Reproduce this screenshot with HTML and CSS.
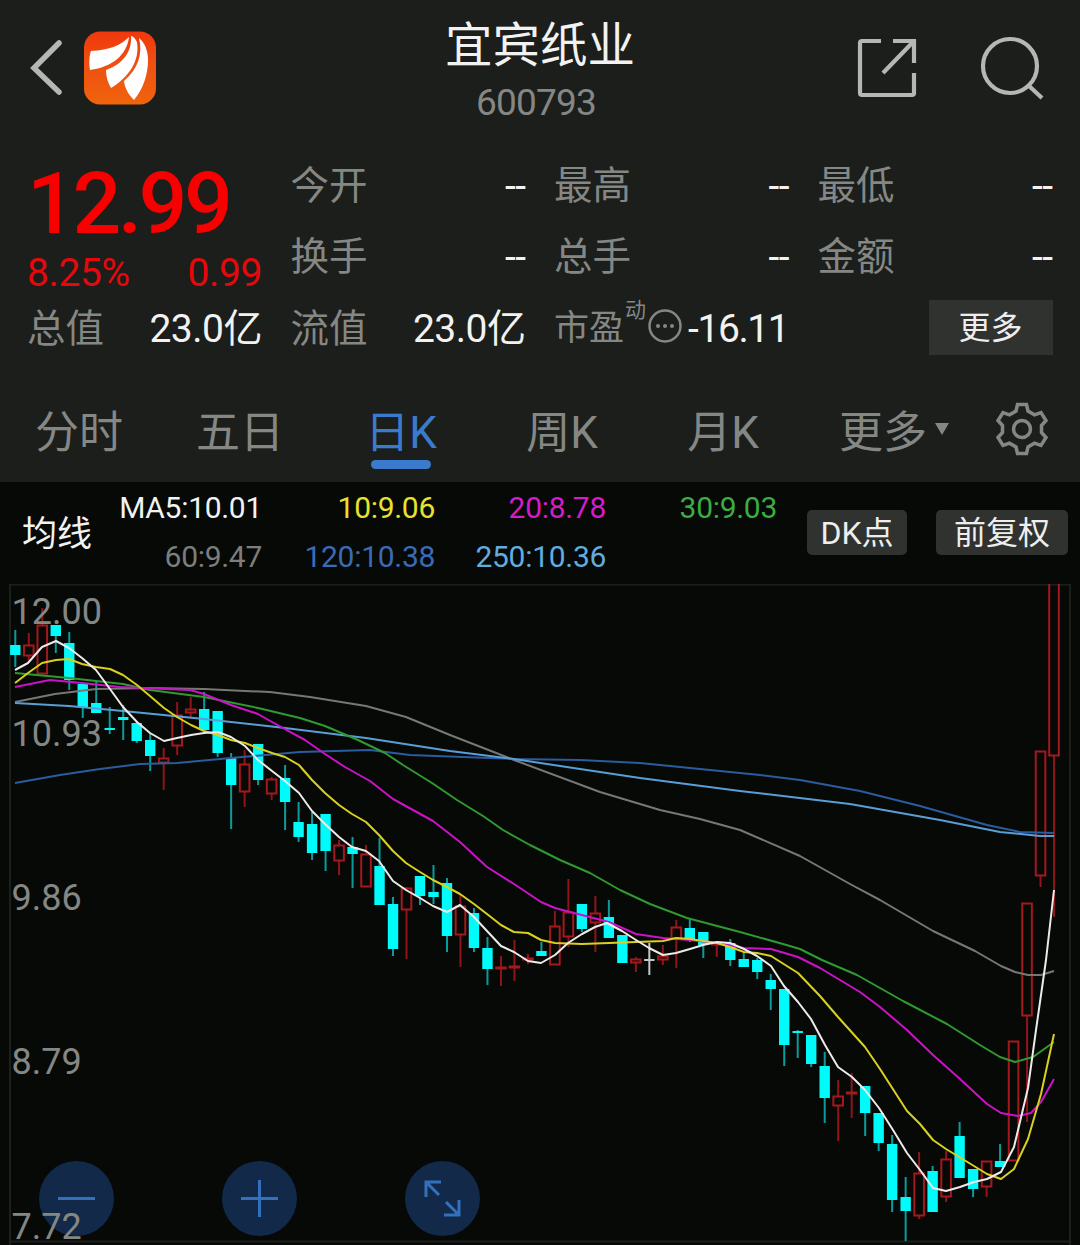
FILE: index.html
```html
<!DOCTYPE html>
<html lang="zh-CN">
<head>
    <meta charset="UTF-8">
    <meta name="viewport" content="width=device-width, initial-scale=1.0">
    <title>宜宾纸业 600793</title>
    <link rel="stylesheet" href="styles.css">
</head>
<body>
    <!-- Header -->
    <header class="header">
        <div class="header-left">
            <svg class="back" width="36" height="60" viewBox="0 0 36 60"><path d="M30 6 L5 31 L30 55"/></svg>
            <svg class="logo" width="74" height="76" viewBox="0 0 74 76">
                <defs>
                    <linearGradient id="logo-bg" x1="0" y1="0" x2="0" y2="1">
                        <stop offset="0" stop-color="#f0380c"/>
                        <stop offset="0.45" stop-color="#ee5012"/>
                        <stop offset="1" stop-color="#f0640c"/>
                    </linearGradient>
                </defs>
                <rect x="1" y="1.500" width="72" height="73" rx="16" fill="url(#logo-bg)"/>
                <path fill="#fff" d="M46 7 C38 15 27 20 8 21 C6 26 6 34 7 40 C29 37 44 25 46 7 Z"/>
                <path fill="#fff" d="M48 6 C49 22 40 34 23 40 C23 47 25 53 28 58 C46 47 57 31 54 12 C52 8 50 6 48 6 Z"/>
                <path fill="#fff" d="M56 8 C60 24 55 39 41 51 C42 59 46 65 51 70 C60 59 65 45 65 30 C65 21 62 13 56 8 Z"/>
            </svg>
        </div>
        <div class="header-title">
            <h1>宜宾纸业</h1>
            <span>600793</span>
        </div>
        <div class="header-right">
            <svg width="60" height="62" viewBox="0 0 60 62">
                <path d="M24 5 H5 Q3 5 3 7 V57 Q3 59 5 59 H55 Q57 59 57 57 V37"/>
                <path d="M36 5 H57 V27 M56 6 L26 37"/>
            </svg>
            <svg width="66" height="68" viewBox="0 0 66 68">
                <circle cx="30" cy="30" r="27"/>
                <path d="M48 49 L62 62"/>
            </svg>
        </div>
    </header>

    <!-- Quote -->
    <section class="quote">
        <div class="price-box">
            <div class="price">12.99</div>
            <div class="change"><span>8.25%</span><span>0.99</span></div>
        </div>
        <div class="item"><label>今开</label><b>--</b></div>
        <div class="item"><label>最高</label><b>--</b></div>
        <div class="item"><label>最低</label><b>--</b></div>
        <div class="item"><label>换手</label><b>--</b></div>
        <div class="item"><label>总手</label><b>--</b></div>
        <div class="item"><label>金额</label><b>--</b></div>
        <div class="item"><label>总值</label><b>23.0亿</b></div>
        <div class="item"><label>流值</label><b>23.0亿</b></div>
        <div class="item pe">
            <label>市盈<sup>动</sup></label>
            <svg width="34" height="36" viewBox="0 0 34 36">
                <circle class="ring" cx="17" cy="18" r="15.5"/>
                <circle cx="10" cy="18" r="2"/><circle cx="17" cy="18" r="2"/><circle cx="24" cy="18" r="2"/>
            </svg>
            <b>-16.11</b>
        </div>
        <div class="item more"><button>更多</button></div>
    </section>

    <!-- Period tabs -->
    <nav class="tabs">
        <a>分时</a>
        <a>五日</a>
        <a class="active">日K</a>
        <a>周K</a>
        <a>月K</a>
        <a class="tab-more">更多<i></i></a>
        <svg class="gear" width="54" height="54" viewBox="0 0 54 54">
            <path d="M22.500 2.500 H31.500 L33 9 L39.500 12.800 L46 10.500 L51 18.500 L46.500 23.500 V30.500 L51 35.500 L46 43.500 L39.500 41.200 L33 45 L31.500 51.500 H22.500 L21 45 L14.500 41.200 L8 43.500 L3 35.500 L7.500 30.500 V23.500 L3 18.500 L8 10.500 L14.500 12.800 L21 9 Z"/>
            <circle cx="27" cy="27" r="8.500"/>
        </svg>
    </nav>

    <!-- Moving averages -->
    <section class="ma">
        <div class="ma-name">均线</div>
        <div class="ma-values">
            <span class="ma5">MA5:10.01</span>
            <span class="ma10">10:9.06</span>
            <span class="ma20">20:8.78</span>
            <span class="ma30">30:9.03</span>
            <span class="ma60">60:9.47</span>
            <span class="ma120">120:10.38</span>
            <span class="ma250">250:10.36</span>
        </div>
        <button class="btn-dk">DK点</button>
        <button class="btn-fq">前复权</button>
    </section>

    <!-- K line chart -->
    <svg class="chart" width="1080" height="661" viewBox="0 584 1080 661">
        <path class="frame" d="M10 1245 V584.500 H1070 V1245 M10 1241.500 H1070"/>
        <g id="candles"></g>
        <g id="lines"></g>
        <g class="tool">
            <circle cx="76.500" cy="1198.500" r="37.500"/>
            <path d="M58 1198.500 H95"/>
            <circle cx="259.500" cy="1198.500" r="37.500"/>
            <path d="M241 1198.500 H278 M259.500 1180 V1217"/>
            <circle cx="442.500" cy="1198.500" r="37.500"/>
            <path d="M426 1197 V1182 H441 M426 1182 L439 1195 M459 1200 V1215 H444 M459 1215 L446 1202"/>
        </g>
        <g class="axis">
            <text x="11.500" y="624">12.00</text>
            <text x="11.500" y="746">10.93</text>
            <text x="11.500" y="910">9.86</text>
            <text x="11.500" y="1074">8.79</text>
            <text x="11.500" y="1238.500">7.72</text>
        </g>
    </svg>

    <script>
        const NS = 'http://www.w3.org/2000/svg';
        const START = 15.3;
        const STEP = 13.49;

        // [type, high, body top, body bottom, low]  d = down, u = up, f = flat
        const candles = [
            ['d',630,645,655,667], ['u',633,645,656,662], ['u',608,625,674,674], ['d',625,625,636,653],
            ['d',632,643,680,690], ['d',684,684,707,718], ['d',682,703,713,713], ['d',707,728,730,734],
            ['d',705,717,720,740], ['d',721,723,741,743], ['d',733,740,756,771], ['u',748,758,763,790],
            ['u',702,715,746,755], ['u',697,709,713,717], ['d',692,709,730,730], ['d',711,711,753,757],
            ['d',753,758,785,829], ['u',750,764,792,807], ['d',744,744,780,785], ['u',777,779,794,800],
            ['d',765,778,802,830], ['d',802,822,837,842], ['d',812,824,853,860], ['d',814,814,851,871],
            ['u',840,845,861,875], ['d',837,847,854,888], ['u',845,854,887,887], ['d',838,866,905,905],
            ['d',897,904,949,956], ['u',887,888,910,959], ['d',876,876,896,905], ['d',865,892,897,904],
            ['d',878,883,936,952], ['u',895,906,935,967], ['d',908,913,948,952], ['d',937,948,969,985],
            ['u',956,967,969,986], ['u',940,966,968,981], ['u',954,958,960,964], ['d',942,951,956,956],
            ['u',911,926,965,965], ['u',879,912,937,947], ['d',904,904,929,932], ['u',896,913,923,952],
            ['d',900,917,938,938], ['d',935,935,963,963], ['u',957,959,963,972], ['f',943,959,961,975],
            ['u',945,956,960,965], ['u',920,927,939,968], ['d',919,928,940,942], ['d',932,932,945,958],
            ['u',941,943,945,957], ['d',939,943,960,966], ['d',953,959,967,967], ['d',958,960,972,979],
            ['d',974,980,989,1010], ['d',989,989,1045,1066], ['d',1030,1031,1033,1058], ['d',1035,1035,1064,1067],
            ['d',1052,1066,1098,1123], ['u',1080,1096,1106,1141], ['u',1073,1092,1094,1118], ['d',1086,1086,1113,1136],
            ['d',1113,1113,1143,1151], ['d',1135,1144,1200,1212], ['d',1177,1197,1211,1241], ['u',1152,1173,1216,1219],
            ['d',1166,1171,1212,1212], ['u',1151,1159,1197,1202], ['d',1122,1136,1178,1178], ['d',1169,1169,1189,1197],
            ['u',1161,1161,1187,1197], ['d',1144,1161,1167,1167], ['u',1041,1041,1161,1161], ['u',903,903,1016,1122],
            ['u',751,751,876,887], ['u',570,570,756,917]
        ];

        // Average lines as x,y points
        const lines = {
            ma60: '15,702 55,694 96,689 150,688 204,689 245,691 270,692 310,697 366,706 406,717 450,735 514,760 600,792 660,810 700,819 740,830 800,856 850,884 880,900 933,931 975,951 1001,966 1015,972 1028,975 1041,975 1054,971',
            ma120: '15,783 60,775 100,769 140,764 177,763 231,758 300,752 370,750 410,755 514,759 580,760 640,763 700,769 760,775 800,780 860,791 920,806 987,825 1020,832 1054,833',
            ma250: '15,703 69,706 123,711 204,719 285,728 366,738 450,751 514,759 580,769 640,778 740,791 850,804 940,820 1000,832 1040,836 1054,836',
            ma30: '15,673 69,678 123,684 150,690 204,697 258,708 300,718 325,726 358,740 385,753 403,765 432,783 457,800 483,816 503,830 530,845 560,860 590,873 620,890 650,904 687,918 740,932 783,944 800,949 822,960 857,975 903,1001 947,1024 980,1045 1000,1057 1015,1062 1033,1057 1054,1042',
            ma20: '15,687 50,680 82,683 120,687 165,689 190,690 204,694 231,705 258,714 272,722 305,740 325,754 345,767 370,781 393,799 433,821 460,842 487,867 514,884 541,902 555,908 570,912 609,922 636,934 663,938 690,940 717,943 744,948 771,949 798,957 820,968 860,992 880,1007 907,1030 933,1055 960,1079 987,1104 1001,1113 1018,1116 1031,1113 1041,1102 1054,1079',
            ma10: '15,683 28,673 42,663 56,660 69,659 82,664 96,667 110,669 123,675 137,685 150,696 164,708 177,717 191,725 204,731 218,735 231,740 245,743 258,748 272,753 285,757 299,765 312,780 325,793 339,805 352,814 366,822 379,835 393,851 406,863 420,872 433,880 447,887 460,894 474,904 487,914 501,925 514,932 528,933 541,940 555,943 582,944 609,943 636,942 663,941 676,938 690,939 703,941 717,943 730,947 744,952 757,953 771,956 798,973 820,996 838,1017 865,1047 880,1069 907,1111 920,1124 933,1140 946,1149 974,1166 987,1174 1001,1179 1014,1169 1028,1139 1041,1094 1054,1034',
            ma5: '15,670 28,663 42,647 56,641 69,648 82,658 96,670 110,689 123,707 137,722 150,733 164,741 177,738 191,735 204,733 218,732 231,737 245,746 258,760 272,771 285,781 299,793 312,811 325,824 339,837 352,847 366,851 379,861 393,881 406,890 420,898 433,906 447,912 460,905 474,917 487,931 501,946 514,952 528,961 541,963 555,955 568,943 582,934 595,927 607,923 622,931 636,940 649,948 663,955 676,953 690,949 703,945 717,942 730,943 744,949 757,956 771,966 784,986 798,1002 811,1019 825,1045 838,1067 852,1077 865,1090 879,1108 893,1130 907,1153 920,1170 933,1188 946,1191 960,1187 974,1182 987,1179 1001,1172 1014,1147 1028,1088 1036,1030 1046,960 1054,890'
        };

        function add(parent, name, attrs) {
            const el = document.createElementNS(NS, name);
            for (const key in attrs) el.setAttribute(key, attrs[key]);
            parent.appendChild(el);
        }

        const candleGroup = document.getElementById('candles');
        candles.forEach(([type, high, top, bottom, low], i) => {
            const x = START + STEP * i;
            if (high < top) add(candleGroup, 'path', { class: 'wick ' + type, d: `M${x} ${high} V${top}` });
            if (low > bottom) add(candleGroup, 'path', { class: 'wick ' + type, d: `M${x} ${bottom} V${low}` });
            add(candleGroup, 'rect', type === 'u'
                ? { class: 'body u', x: x - 4.8, y: top + 0.5, width: 9.6, height: bottom - top - 1 }
                : { class: 'body ' + type, x: x - 5.2, y: top, width: 10.4, height: bottom - top });
        });

        const lineGroup = document.getElementById('lines');
        for (const name in lines) add(lineGroup, 'polyline', { class: name, points: lines[name] });
    </script>
</body>
</html>
```
FILE: styles.css
```css
* {
    box-sizing: border-box;
}
body {
    margin: 0;
    width: 1080px;
    height: 1245px;
    overflow: hidden;
    background-color: #1b1e1a;
    color: #f2f2f2;
    font-family: Roboto, "Noto Sans CJK SC", sans-serif;
}
svg {
    display: block;
    fill: none;
}
button {
    border: none;
    padding: 0;
    color: #eee;
    font-family: inherit;
    background-color: #303230;
}

/* Header */
.header {
    display: grid;
    grid-template-columns: 1fr auto 1fr;
    height: 149px;
}
.header-left {
    display: flex;
    align-items: flex-start;
    gap: 18px;
    padding: 30px 0 0 29px;
}
.back {
    margin-top: 7px;
    stroke: #b5b7b4;
    stroke-width: 5.5;
    stroke-linecap: round;
}
.header-title {
    display: flex;
    flex-direction: column;
    align-items: center;
    padding-top: 16px;
}
.header-title h1 {
    margin: 0;
    font-size: 47.5px;
    font-weight: 400;
    line-height: 60px;
}
.header-title span {
    margin-top: 5px;
    margin-right: 8px;
    font-size: 37px;
    line-height: 44px;
    letter-spacing: -0.8px;
    color: #858785;
}
.header-right {
    display: flex;
    justify-content: flex-end;
    align-items: flex-start;
    gap: 63px;
    padding: 36px 34px 0 0;
    stroke: #b5b7b4;
    stroke-width: 4.2;
}

/* Quote */
.quote {
    display: grid;
    grid-template-columns: repeat(4, 235px);
    grid-template-rows: 71px 71px 72px;
    column-gap: 28.5px;
    padding-left: 27px;
    height: 222px;
}
.price-box {
    grid-row: span 2;
    color: #f80000;
}
.price {
    padding-top: 10px;
    font-size: 86px;
    font-weight: 500;
    line-height: 90px;
    letter-spacing: -3.4px;
}
.change {
    display: flex;
    justify-content: space-between;
    padding-top: 1px;
    color: #e5080d;
    font-size: 39px;
    line-height: 46px;
    letter-spacing: -0.4px;
}
.item {
    display: flex;
    align-items: center;
    justify-content: space-between;
    padding-top: 3px;
    font-size: 39px;
    line-height: 60px;
}
.item label {
    color: #858785;
    font-size: 38.5px;
}
.item b {
    font-weight: 400;
    letter-spacing: -0.5px;
}
.pe {
    justify-content: flex-start;
}
.pe label {
    font-size: 35px;
    white-space: nowrap;
}
.pe sup {
    font-size: 21px;
    line-height: 0;
    vertical-align: 23px;
    margin-left: 1px;
}
.pe svg {
    margin: -5px 6px 0 2px;
    fill: #858785;
    flex: none;
}
.pe b {
    letter-spacing: -1.4px;
}
.pe .ring {
    fill: none;
    stroke: #858785;
    stroke-width: 2.5;
}
.more {
    justify-content: flex-end;
    padding-top: 0;
}
.more button {
    width: 124px;
    height: 55px;
    padding-top: 2px;
    font-size: 32px;
    line-height: 50px;
}

/* Period tabs */
.tabs {
    display: flex;
    height: 111px;
    padding-top: 30px;
    color: #858785;
}
.tabs a {
    width: 161px;
    padding: 2px 3px 0 0;
    font-size: 44px;
    line-height: 60px;
    text-align: center;
}
.tabs .active {
    color: #3b7bce;
}
.tabs .active::after {
    content: "";
    display: block;
    width: 60px;
    height: 9px;
    margin: -3px 0 0 49px;
    border-radius: 5px;
    background-color: #3b7bce;
}
.tabs .tab-more {
    display: flex;
    align-items: center;
    width: 190px;
    height: 62px;
    padding-left: 34px;
}
.tab-more i {
    margin: -8px 0 0 8px;
    border: 7px solid transparent;
    border-top: 12px solid #858785;
    border-bottom: 0;
}
.gear {
    margin-top: 1px;
    stroke: #858785;
    stroke-width: 3.5;
}

/* Moving averages */
.ma {
    display: flex;
    align-items: flex-start;
    height: 102px;
    background-color: #060906;
}
.ma-name {
    width: 91px;
    padding: 23px 0 0 22px;
    font-size: 35px;
    line-height: 60px;
    white-space: nowrap;
}
.ma-values {
    display: grid;
    grid-template-columns: 171px 173px 171px 171px;
    grid-auto-rows: 49px;
    width: 716px;
    padding-top: 1px;
    font-size: 30px;
    line-height: 49px;
    letter-spacing: -0.3px;
    text-align: right;
}
.ma button {
    height: 45px;
    margin-top: 28px;
    padding-top: 1px;
    border-radius: 5px;
    font-size: 32px;
    line-height: 42px;
}
.btn-dk {
    width: 100px;
}
.btn-fq {
    width: 132px;
    margin-left: 29px;
}
span.ma5 { color: #f2f2f2; }
span.ma10 { color: #e8e22c; }
span.ma20 { color: #d41ccb; }
span.ma30 { color: #3cad40; }
span.ma60 { color: #7c7e7c; }
span.ma120 { color: #3a6bb4; }
span.ma250 { color: #62acdf; }

/* Chart */
.chart {
    background-color: #060906;
}
.frame {
    stroke: #1c201b;
    stroke-width: 2;
}
.wick {
    stroke-width: 2;
}
.wick.d { stroke: #0a9c9c; }
.wick.u { stroke: #8f1519; }
.wick.f { stroke: #c8c8c8; }
.body.d { fill: #00fbfb; }
.body.f { fill: #c8c8c8; }
.body.u {
    stroke: #a5181d;
    stroke-width: 2;
}
polyline {
    stroke-width: 2;
    stroke-linejoin: round;
}
polyline.ma5 { stroke: #eeeaea; }
polyline.ma10 { stroke: #d9d01f; }
polyline.ma20 { stroke: #cb12c7; }
polyline.ma30 { stroke: #309a31; }
polyline.ma60 { stroke: #777874; }
polyline.ma120 { stroke: #2b5c9f; }
polyline.ma250 { stroke: #5a9ed8; }
.tool circle {
    fill: #12294a;
}
.tool path {
    stroke: #3371bd;
    stroke-width: 3;
}
.axis {
    fill: #858785;
    font-size: 36px;
}
```
